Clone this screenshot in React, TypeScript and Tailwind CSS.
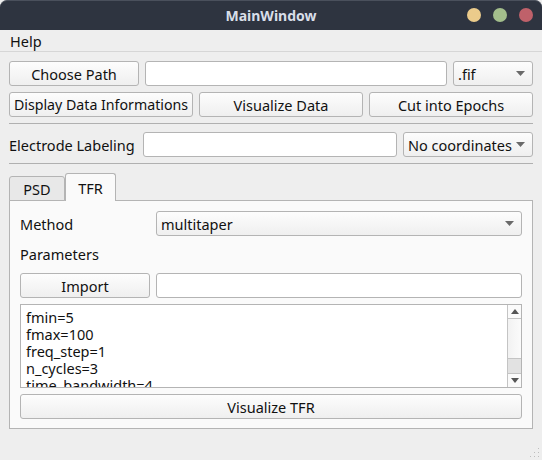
const font = "font-['Noto_Sans','Open_Sans',sans-serif]";

function Btn({ className = "", children }: { className?: string; children: React.ReactNode }) {
  return (
    <div className={`h-[25px] flex items-center justify-center rounded-[3px] border border-[#b4b4b4] bg-gradient-to-b from-[#fdfdfd] to-[#efefef] text-[#111] whitespace-nowrap ${className}`}>
      {children}
    </div>
  );
}

function Field({ className = "" }: { className?: string }) {
  return <div className={`h-[25px] rounded-[3px] border border-[#b4b4b4] bg-white ${className}`} />;
}

function Combo({ className = "", text }: { className?: string; text: string }) {
  return (
    <div className={`h-[25px] flex items-center justify-between pl-[4px] pr-[7px] rounded-[3px] border border-[#b4b4b4] bg-gradient-to-b from-[#fdfdfd] to-[#efefef] text-[#111] whitespace-nowrap ${className}`}>
      <span>{text}</span>
      <svg width="9" height="5" viewBox="0 0 9 5" className="shrink-0"><path d="M0 0h9L4.5 5z" fill="#6a6a6a" /></svg>
    </div>
  );
}

function Hr() {
  return <div className="h-px bg-[#b0b0b0]" />;
}

function Dot({ color }: { color: string }) {
  return <div className="w-[14px] h-[14px] rounded-full" style={{ backgroundColor: color }} />;
}

export default function App() {
  return (
    <div className={`${font} w-[542px] h-[460px] relative flex flex-col bg-[#eeeeee] text-[14.5px] leading-[20px] text-[#111] overflow-hidden`}>
      <div className="h-[30px] shrink-0 flex items-center justify-center relative bg-[#2e3440] rounded-t-[7px] border-t border-[#4a505c]">
        <span className="font-bold text-[14px] text-[#d8dee9]">MainWindow</span>
        <div className="absolute right-[9px] top-[7px] flex gap-[12px]">
          <Dot color="#ebcb8b" />
          <Dot color="#a3be8c" />
          <Dot color="#bf616a" />
        </div>
      </div>

      <div className="h-[22px] shrink-0 flex items-center pl-[10px] border-b border-[#d6d6d6]">Help</div>

      <div className="flex flex-col pl-[9px] pr-[9px] pt-[9px]">
        <div className="flex gap-[6px]">
          <Btn className="w-[130px]">Choose Path</Btn>
          <Field className="flex-1" />
          <Combo className="w-[80px]" text=".fif" />
        </div>
        <div className="flex gap-[6px] mt-[6px]">
          <Btn className="w-[184px] text-[14.2px]">Display Data Informations</Btn>
          <Btn className="flex-1">Visualize Data</Btn>
          <Btn className="w-[164px]">Cut into Epochs</Btn>
        </div>
        <div className="mt-[6px]"><Hr /></div>
        <div className="flex gap-[6px] mt-[8px] items-center">
          <span className="w-[128px] whitespace-nowrap">Electrode Labeling</span>
          <Field className="flex-1" />
          <Combo className="w-[130px]" text="No coordinates" />
        </div>
        <div className="mt-[6px]"><Hr /></div>

        <div className="mt-[8px] flex items-end h-[28px] relative z-10">
          <div className="w-[56px] h-[25px] flex items-center justify-center bg-[#e8e8e8] border border-[#b4b4b4] rounded-t-[3px] mb-[-1px]">PSD</div>
          <div className="w-[51px] h-[28px] flex items-center justify-center bg-[#fafafa] border border-[#b4b4b4] border-b-0 rounded-t-[3px] mb-[-1px]">TFR</div>
        </div>
        <div className="h-[229px] border border-[#b4b4b4] bg-[#fafafa] px-[10px] pt-[10px] flex flex-col">
          <div className="flex items-center">
            <span className="w-[136px]">Method</span>
            <Combo className="flex-1" text="multitaper" />
          </div>
          <div className="mt-[8px] h-[20px] flex items-center">Parameters</div>
          <div className="flex gap-[6px] mt-[9px]">
            <Btn className="w-[130px]">Import</Btn>
            <Field className="flex-1" />
          </div>
          <div className="mt-[6px] h-[84px] border border-[#b4b4b4] bg-white flex overflow-hidden">
            <div className="flex-1 pl-[5px] pt-[4px] text-[14.5px] leading-[17px] overflow-hidden">
              <div>fmin=5</div>
              <div>fmax=100</div>
              <div>freq_step=1</div>
              <div>n_cycles=3</div>
              <div>time_bandwidth=4</div>
            </div>
            <div className="w-[14px] shrink-0 border-l border-[#c4c4c4] flex flex-col bg-gradient-to-r from-[#f2f2f2] to-[#fbfbfb]">
              <div className="h-[14px] flex items-center justify-center border-b border-[#c4c4c4] bg-[#fafafa]">
                <svg width="8" height="5" viewBox="0 0 8 5"><path d="M4 0l4 5H0z" fill="#555" /></svg>
              </div>
              <div className="flex-1" />
              <div className="h-[15px] bg-[#e2e2e2] border-t border-[#c4c4c4]" />
              <div className="h-[14px] flex items-center justify-center border-t border-[#c4c4c4] bg-[#fafafa]">
                <svg width="8" height="5" viewBox="0 0 8 5"><path d="M0 0h8L4 5z" fill="#555" /></svg>
              </div>
            </div>
          </div>
          <Btn className="mt-[6px]">Visualize TFR</Btn>
        </div>
      </div>

      <svg className="absolute right-[2px] bottom-[2px]" width="11" height="11" viewBox="0 0 11 11" fill="#bdbdbd">
        <rect x="9" y="1" width="1" height="1" /><rect x="9" y="5" width="1" height="1" /><rect x="9" y="9" width="1" height="1" />
        <rect x="5" y="5" width="1" height="1" /><rect x="5" y="9" width="1" height="1" /><rect x="1" y="9" width="1" height="1" />
      </svg>
    </div>
  );
}
